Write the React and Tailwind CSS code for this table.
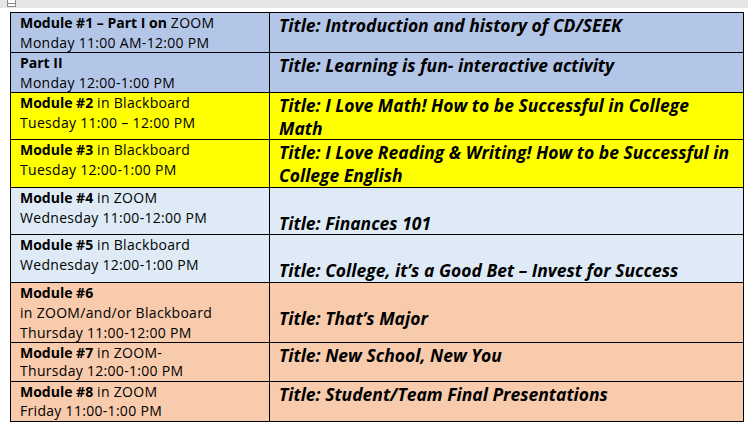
const rows = [
  {
    bg: 'bg-[#b4c6e7]',
    h: 'h-[40px]',
    lead: 'leading-[20px]',
    left: [
      <><b>Module #1 – Part I on</b> ZOOM</>,
      'Monday 11:00 AM-12:00 PM',
    ],
    title: ['Title: Introduction and history of CD/SEEK'],
  },
  {
    bg: 'bg-[#b4c6e7]',
    h: 'h-[40px]',
    lead: 'leading-[20px]',
    left: [<b>Part II</b>, 'Monday 12:00-1:00 PM'],
    title: ['Title: Learning is fun- interactive activity'],
  },
  {
    bg: 'bg-[#ffff00]',
    h: 'h-[47px]',
    lead: 'leading-[20px]',
    left: [<><b>Module #2</b> in Blackboard</>, 'Tuesday 11:00 – 12:00 PM'],
    title: ['Title: I Love Math! How to be Successful in College', 'Math'],
  },
  {
    bg: 'bg-[#ffff00]',
    h: 'h-[48px]',
    lead: 'leading-[20px]',
    left: [<><b>Module #3</b> in Blackboard</>, 'Tuesday 12:00-1:00 PM'],
    title: ['Title: I Love Reading & Writing! How to be Successful in', 'College English'],
  },
  {
    bg: 'bg-[#deebf7]',
    h: 'h-[47px]',
    lead: 'leading-[20px]',
    left: [<><b>Module #4</b> in ZOOM</>, 'Wednesday 11:00-12:00 PM'],
    title: ['Title: Finances 101'],
    blank: true,
  },
  {
    bg: 'bg-[#deebf7]',
    h: 'h-[48px]',
    lead: 'leading-[20px]',
    left: [<><b>Module #5</b> in Blackboard</>, 'Wednesday 12:00-1:00 PM'],
    title: ['Title: College, it’s a Good Bet – Invest for Success'],
    blank: true,
  },
  {
    bg: 'bg-[#f8cbad]',
    h: 'h-[60px]',
    lead: 'leading-[20px]',
    left: [<b>Module #6</b>, 'in ZOOM/and/or Blackboard', 'Thursday 11:00-12:00 PM'],
    title: ['Title: That’s Major'],
    blank: true,
  },
  {
    bg: 'bg-[#f8cbad]',
    h: 'h-[39px]',
    lead: 'leading-[18px] pt-[1px]',
    left: [<><b>Module #7</b> in ZOOM-</>, 'Thursday 12:00-1:00 PM'],
    title: ['Title: New School, New You'],
  },
  {
    bg: 'bg-[#f8cbad]',
    h: 'h-[40px]',
    lead: 'leading-[19px]',
    left: [<><b>Module #8</b> in ZOOM</>, 'Friday 11:00-1:00 PM'],
    title: ['Title: Student/Team Final Presentations'],
  },
];

export default function App() {
  return (
    <div className="w-[748px] h-[426px] bg-white overflow-hidden text-black font-['Open_Sans',sans-serif]">
      <div className="h-[8px] bg-[#e6e6e6] relative">
        <div className="absolute left-[7px] top-[-3px] w-[9px] h-[10px] border border-[#8a8a8a] bg-white">
          <div className="mt-[5px] border-t border-[#8a8a8a]" />
        </div>
      </div>
      <div className="pt-[4px] pl-[10px]">
        <div className="w-[734px] border-l border-t border-black">
          {rows.map((row, i) => (
            <div key={i} className={`flex border-b border-black ${row.bg} ${row.h}`}>
              <div className={`w-[259px] shrink-0 border-r border-black pl-[9px] text-[14px] tracking-[0.3px] [&_b]:tracking-normal ${row.lead}`}>
                {row.left.map((line, j) => (
                  <div key={j} className="whitespace-nowrap">{line}</div>
                ))}
              </div>
              <div className="flex-1 border-r border-black pl-[9px] pt-[1px] text-[17.5px] leading-[23px] font-bold italic">
                {row.blank && <div className="h-[23px]" />}
                {row.title.map((line, j) => (
                  <div key={j} className="whitespace-nowrap">{line}</div>
                ))}
              </div>
            </div>
          ))}
        </div>
      </div>
    </div>
  );
}
